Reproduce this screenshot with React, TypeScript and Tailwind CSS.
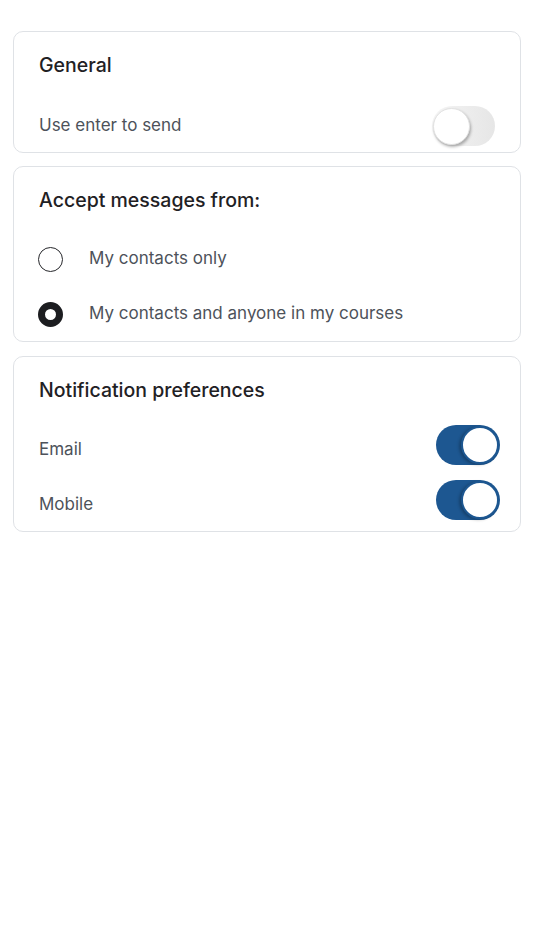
import React from "react";

function Toggle({ on }: { on: boolean }) {
  if (on) {
    return (
      <div className="relative h-[40px] w-[64px] rounded-full bg-[#1d5791]">
        <div className="absolute right-[1px] top-[1px] h-[38px] w-[38px] rounded-full bg-white border-2 border-[#1d5791] shadow-[-2px_1px_3px_rgba(0,0,0,0.25)]" />
      </div>
    );
  }
  return (
    <div className="relative h-[40px] w-[63px] rounded-full bg-gradient-to-r from-[#f5f5f5] to-[#e6e6e6]">
      <div className="absolute left-[1px] top-[2px] h-[37px] w-[37px] rounded-full bg-white border border-[#e2e2e2] shadow-[1px_2px_3px_rgba(0,0,0,0.3)]" />
    </div>
  );
}

function Radio({ checked }: { checked: boolean }) {
  return checked ? (
    <div className="h-[25px] w-[25px] rounded-full border-[7px] border-[#1c1d20] bg-white" />
  ) : (
    <div className="h-[25px] w-[25px] rounded-full border-[1.5px] border-[#26272b] bg-white" />
  );
}

export default function App() {
  return (
    <div
      className="min-h-[950px] w-full bg-white px-[13px] pt-[31px]"
      style={{ fontFamily: "Inter, 'Noto Sans', sans-serif" }}
    >
      <div className="flex flex-col">
        <div className="rounded-[10px] border border-[#dfe2e6] pl-[25px] pr-[25px] pt-[19px] pb-[6px]">
          <div className="h-[28px] text-[19.5px] leading-[28px] font-medium text-[#1f2124]">General</div>
          <div className="mt-[27px] flex h-[40px] items-center justify-between">
            <span className="text-[17px] text-[#4d525a]">Use enter to send</span>
            <Toggle on={false} />
          </div>
        </div>

        <div className="mt-[13px] rounded-[10px] border border-[#dfe2e6] pl-[24px] pr-[20px] pt-[19px] pb-[7px]">
          <div className="h-[28px] pl-[1px] text-[19.5px] leading-[28px] font-medium text-[#1f2124]">
            Accept messages from:
          </div>
          <div className="mt-[25px] flex flex-col gap-[15px]">
            <div className="flex h-[40px] items-center gap-[26px]">
              <Radio checked={false} />
              <span className="text-[17px] text-[#4d525a]">My contacts only</span>
            </div>
            <div className="flex h-[40px] items-center gap-[26px]">
              <Radio checked={true} />
              <span className="text-[17px] text-[#4d525a]">My contacts and anyone in my courses</span>
            </div>
          </div>
        </div>

        <div className="mt-[14px] rounded-[10px] border border-[#dfe2e6] pl-[25px] pr-[20px] pt-[19px] pb-[6px]">
          <div className="h-[28px] text-[19.5px] leading-[28px] font-medium text-[#1f2124]">
            Notification preferences
          </div>
          <div className="mt-[26px] flex flex-col gap-[15px]">
            <div className="flex h-[40px] items-center justify-between">
              <span className="text-[17px] text-[#4d525a]">Email</span>
              <div className="relative -top-[5px]">
                <Toggle on={true} />
              </div>
            </div>
            <div className="flex h-[40px] items-center justify-between">
              <span className="text-[17px] text-[#4d525a]">Mobile</span>
              <div className="relative -top-[5px]">
                <Toggle on={true} />
              </div>
            </div>
          </div>
        </div>
      </div>
    </div>
  );
}
